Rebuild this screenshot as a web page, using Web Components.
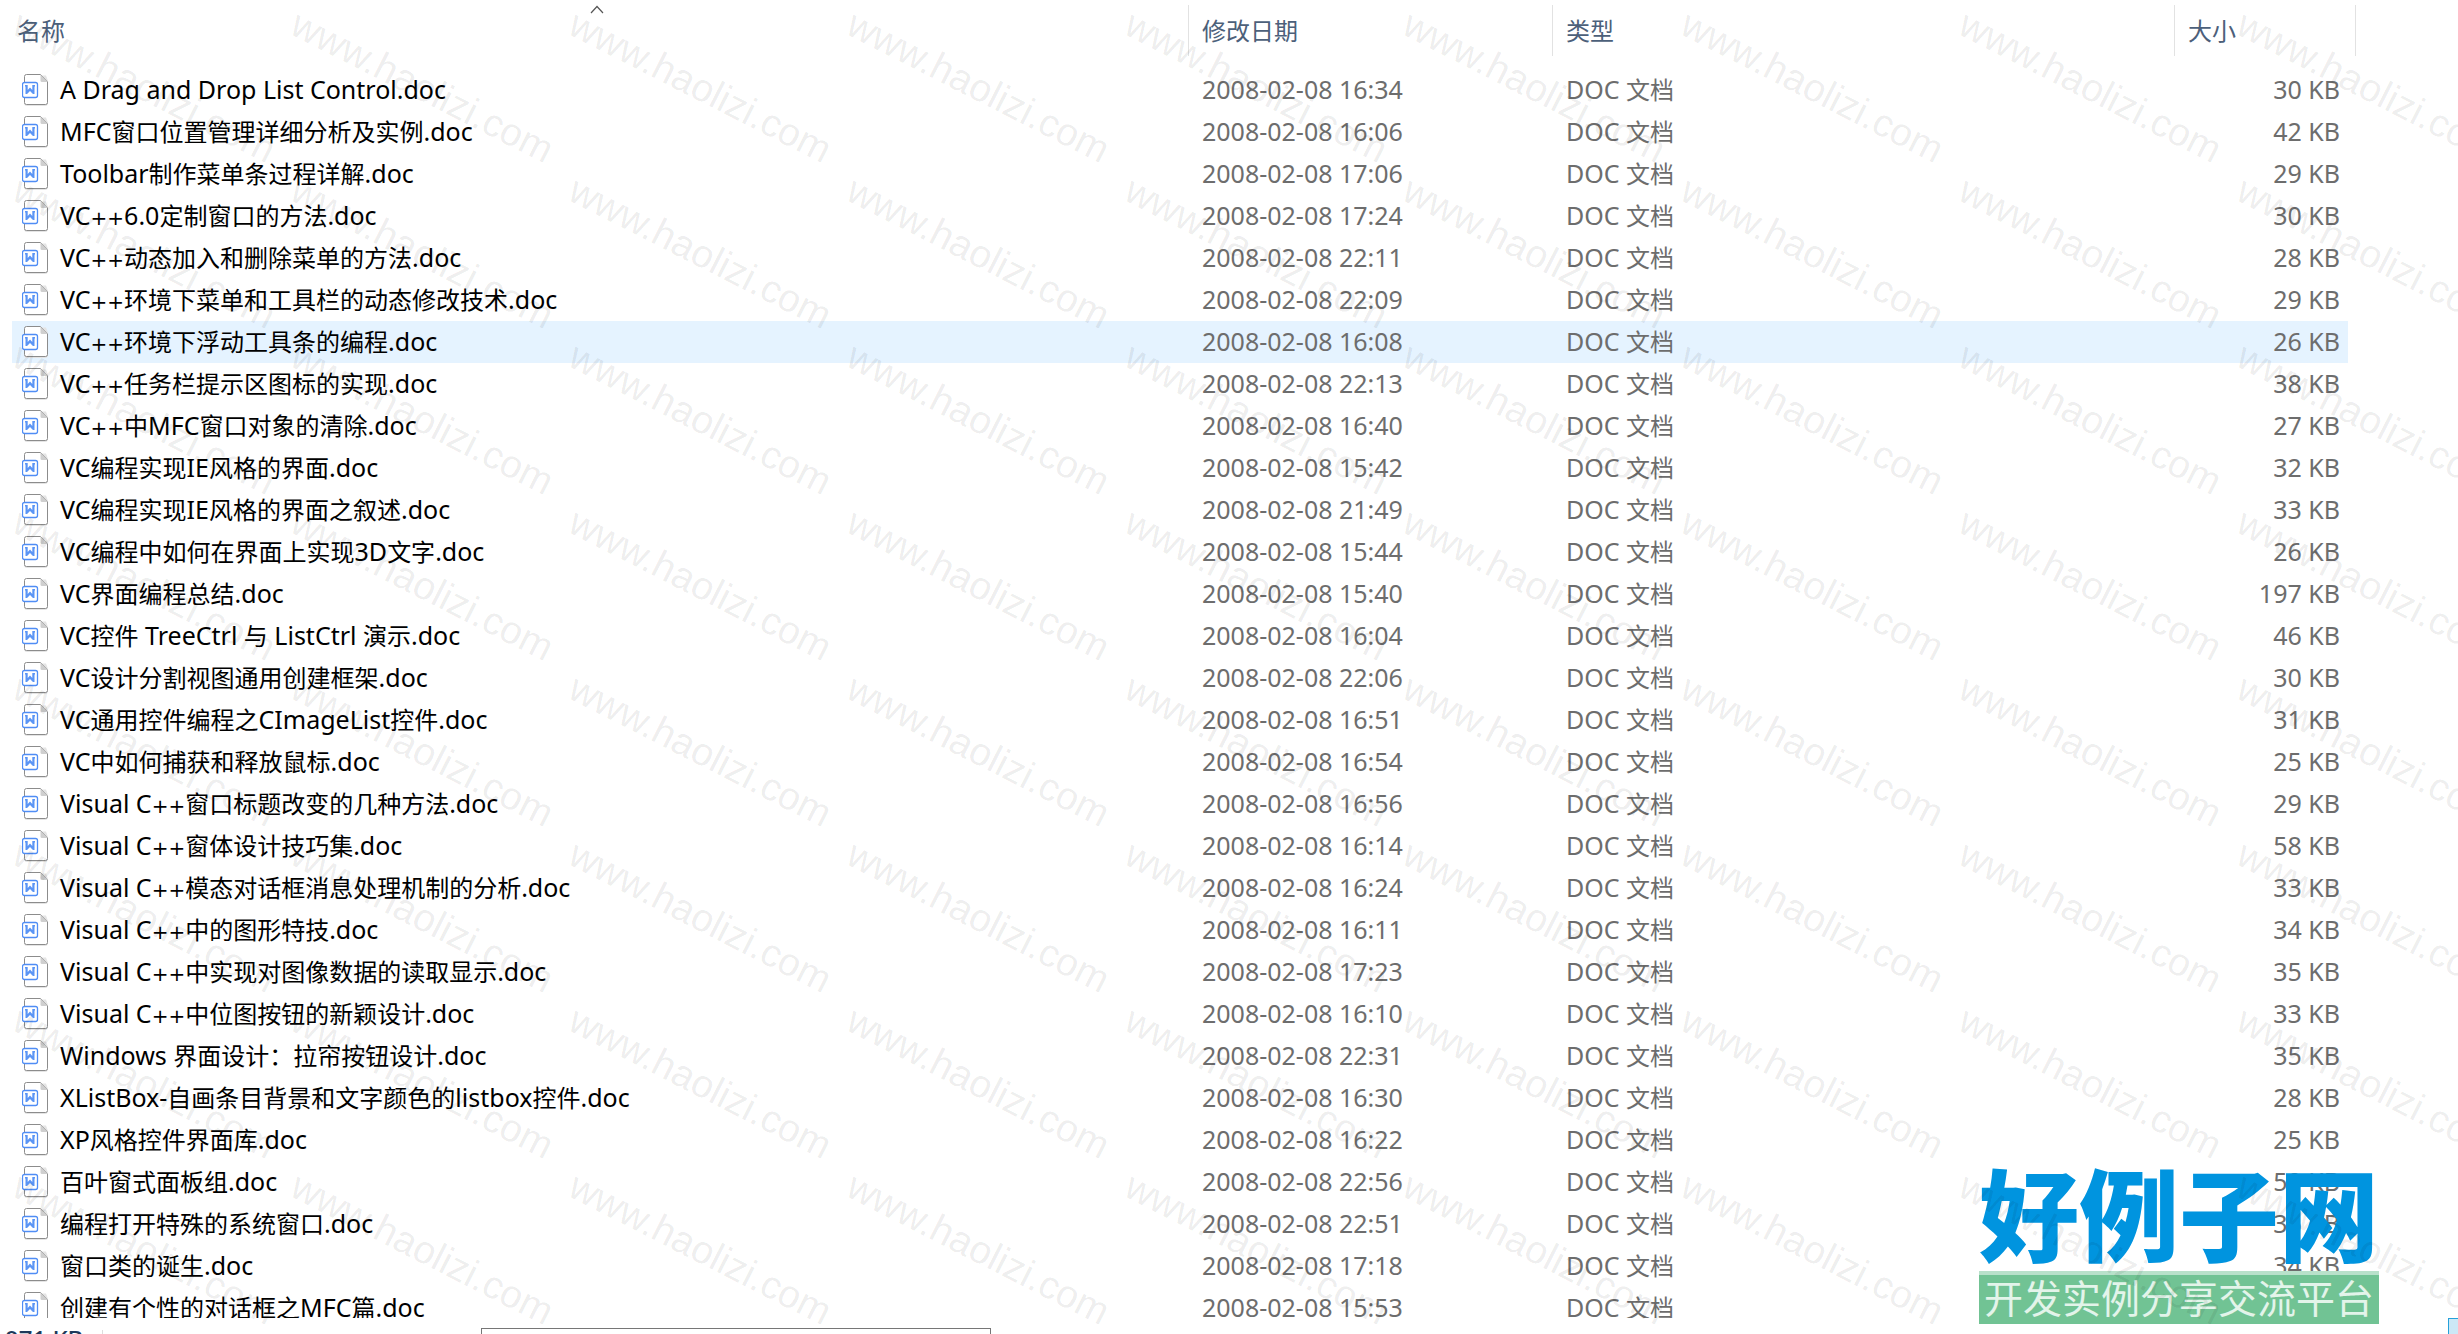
<!DOCTYPE html>
<html lang="zh-CN">
<head>
<meta charset="utf-8">
<title>文件列表</title>
<style>
html,body{height:100%}
body{margin:0;background:#fff;overflow:hidden;font-family:"Noto Sans","Noto Sans CJK SC",sans-serif;font-size:24px;line-height:42px;color:#000}
</style>
</head>
<body>
<file-explorer></file-explorer>
<script>
const FILES=[
["A Drag and Drop List Control.doc","16:34",30],
["MFC窗口位置管理详细分析及实例.doc","16:06",42],
["Toolbar制作菜单条过程详解.doc","17:06",29],
["VC++6.0定制窗口的方法.doc","17:24",30],
["VC++动态加入和删除菜单的方法.doc","22:11",28],
["VC++环境下菜单和工具栏的动态修改技术.doc","22:09",29],
["VC++环境下浮动工具条的编程.doc","16:08",26],
["VC++任务栏提示区图标的实现.doc","22:13",38],
["VC++中MFC窗口对象的清除.doc","16:40",27],
["VC编程实现IE风格的界面.doc","15:42",32],
["VC编程实现IE风格的界面之叙述.doc","21:49",33],
["VC编程中如何在界面上实现3D文字.doc","15:44",26],
["VC界面编程总结.doc","15:40",197],
["VC控件 TreeCtrl 与 ListCtrl 演示.doc","16:04",46],
["VC设计分割视图通用创建框架.doc","22:06",30],
["VC通用控件编程之CImageList控件.doc","16:51",31],
["VC中如何捕获和释放鼠标.doc","16:54",25],
["Visual C++窗口标题改变的几种方法.doc","16:56",29],
["Visual C++窗体设计技巧集.doc","16:14",58],
["Visual C++模态对话框消息处理机制的分析.doc","16:24",33],
["Visual C++中的图形特技.doc","16:11",34],
["Visual C++中实现对图像数据的读取显示.doc","17:23",35],
["Visual C++中位图按钮的新颖设计.doc","16:10",33],
["Windows 界面设计：拉帘按钮设计.doc","22:31",35],
["XListBox-自画条目背景和文字颜色的listbox控件.doc","16:30",28],
["XP风格控件界面库.doc","16:22",25],
["百叶窗式面板组.doc","22:56",50],
["编程打开特殊的系统窗口.doc","22:51",36],
["窗口类的诞生.doc","17:18",34],
["创建有个性的对话框之MFC篇.doc","15:53",0]
];

// Latin runs are set one pixel larger than the Chinese text around them.
const runs=s=>s.replace(/[\x20-\x7e]+/g,m=>`<span class="latin">${m.replace(/\++/g,'<span class="plus">$&</span>')}</span>`);

class DocIcon extends HTMLElement{
  constructor(){
    super();
    this.attachShadow({mode:"open"}).innerHTML=`
    <style>:host{display:block;width:28px;height:32px}svg{display:block}</style>
    <svg width="28" height="32" viewBox="0 0 28 32" aria-hidden="true">
      <path d="M5 1.5H24Q26 6 26 9V29Q26 32 23 32H5Q2 32 2 29Z" fill="#e4e4e4"/>
      <path d="M4.5 .5H18.5L25.5 8V28.5Q25.5 30.5 23.5 30.5H4.5Q2.5 30.5 2.5 28.5V2.5Q2.5 .5 4.5 .5Z" fill="#fff" stroke="#8c8c8c"/>
      <path d="M18.5 .5L25.5 8H20Q18.5 8 18.5 6.5Z" fill="#cfcfcf"/>
      <rect x=".5" y="8.5" width="15" height="15" rx="2" fill="#fff" stroke="#4f8df5" stroke-width="1.3"/>
      <path d="M3 11H5.700V16L8 13.500L10.300 16V11H13V12.500H12.500V20H11L8 17L5 20H3.500V12.500H3Z" fill="#5b95f5"/>
    </svg>`;
  }
}
customElements.define("doc-icon",DocIcon);

class FileTable extends HTMLElement{
  constructor(){
    super();
    this.attachShadow({mode:"open"}).innerHTML=`
    <style>
      :host{display:block}
      table{width:100%;border-collapse:collapse;table-layout:fixed}
      .d{width:364px}.t{width:622px}.s{width:173px}
      th,td{padding:0;text-align:left;font-weight:400;white-space:nowrap}
      thead th{height:69px;vertical-align:top}
      thead div{position:relative;height:51px;margin-top:5px;border-right:1px solid #e2e2e2;box-sizing:border-box;display:flex}
      th:last-child div{margin-right:-8px}
      button{all:unset;flex:1;padding-left:13px;line-height:52px;color:#4c607a}
      th:first-child button{padding-left:5px}
      thead svg{position:absolute;left:50%;top:0;margin-left:-10px}
      tbody tr{height:42px}
      tr[aria-selected=true]{background:#e5f3ff}
      td{color:#6d6d6d;padding-left:13px}
      td:last-child{text-align:right;padding:0 8px 0 0}
      td:first-child{color:#000;padding:0}
      .f{display:flex;align-items:center;gap:10px;padding-left:10px;height:42px}
      .latin{font-size:25px;line-height:1}
      .plus{font:20px/1 "DejaVu Sans",sans-serif}
    </style>
    <table>
      <colgroup><col><col class="d"><col class="t"><col class="s"></colgroup>
      <thead><tr><th aria-sort="ascending"><div><button>名称</button><svg width="14" height="9" viewBox="0 0 14 9" aria-hidden="true"><path d="M1 8L7 1.5L13 8" fill="none" stroke="#555" stroke-width="1.2"/></svg></div></th><th><div><button>修改日期</button></div></th><th><div><button>类型</button></div></th><th><div><button>大小</button></div></th></tr></thead>
      <tbody>${FILES.map((f,i)=>`<tr${i===6?' aria-selected="true"':''}><td><div class="f"><doc-icon></doc-icon><span>${runs(f[0])}</span></div></td><td>${runs("2008-02-08 "+f[1])}</td><td>${runs("DOC 文档")}</td><td>${f[2]?runs(f[2]+" KB"):""}</td></tr>`).join("")}</tbody>
    </table>`;
  }
}
customElements.define("file-table",FileTable);

class StatusBar extends HTMLElement{
  constructor(){
    super();
    this.attachShadow({mode:"open"}).innerHTML=`
    <style>
      :host{display:flex;height:16px;overflow:hidden;line-height:42px;color:#1e395b;font-weight:500}
      .size{width:97px;padding-left:5px;height:42px}
      .sep{width:1px;margin-top:12px;background:#ddd}
      .field{box-sizing:border-box;width:510px;height:40px;margin:10px 0 0 378px;border:1px solid #767676;background:#fff}
      button{all:unset;box-sizing:border-box;width:40px;height:40px;margin:0 -30px 0 auto;border:1px solid #26a0da;background:#cce8f6}
    </style>
    <span class="size">971 KB</span><i class="sep"></i><div class="field"></div><button aria-label="详细信息"></button>`;
  }
}
customElements.define("status-bar",StatusBar);

class SiteLogo extends HTMLElement{
  constructor(){
    super();
    this.attachShadow({mode:"open"}).innerHTML=`
    <style>
      :host{display:block;width:400px;text-align:center;white-space:nowrap;font-family:"Noto Sans CJK SC",sans-serif}
      .name{font-size:100px;line-height:100px;font-weight:900;color:#0094df}
      .tag{margin-top:10px;border-top:4px solid #b8e1ca;background:#71c394;color:#e3f4ea;font-size:39px;line-height:43px;padding-bottom:6px}
    </style>
    <div class="name">好例子网</div><div class="tag">开发实例分享交流平台</div>`;
  }
}
customElements.define("site-logo",SiteLogo);

class WaterMark extends HTMLElement{
  constructor(){
    super();
    this.attachShadow({mode:"open"}).innerHTML=`
    <style>
      :host{display:grid;grid-template-columns:repeat(9,278px);grid-auto-rows:166px;padding-left:10px;overflow:hidden;pointer-events:none;font:39px/40px "Liberation Sans",sans-serif;color:rgba(0,0,0,.08)}
      span{justify-self:start;align-self:start;transform-origin:0 33px;transform:rotate(27deg)}
    </style>${"<span>www.haolizi.com</span>".repeat(72)}`;
  }
}
customElements.define("water-mark",WaterMark);

class FileExplorer extends HTMLElement{
  constructor(){
    super();
    this.attachShadow({mode:"open"}).innerHTML=`
    <style>
      :host{display:flex;flex-direction:column;height:100%;position:relative;overflow:hidden}
      file-table{flex:1;min-height:0;overflow:hidden;padding:0 110px 0 12px}
      status-bar{flex:none}
      site-logo{position:absolute;right:79px;bottom:10px}
      water-mark{position:absolute;inset:0}
    </style>
    <file-table></file-table><status-bar></status-bar><site-logo></site-logo><water-mark></water-mark>`;
  }
}
customElements.define("file-explorer",FileExplorer);
</script>
</body>
</html>
